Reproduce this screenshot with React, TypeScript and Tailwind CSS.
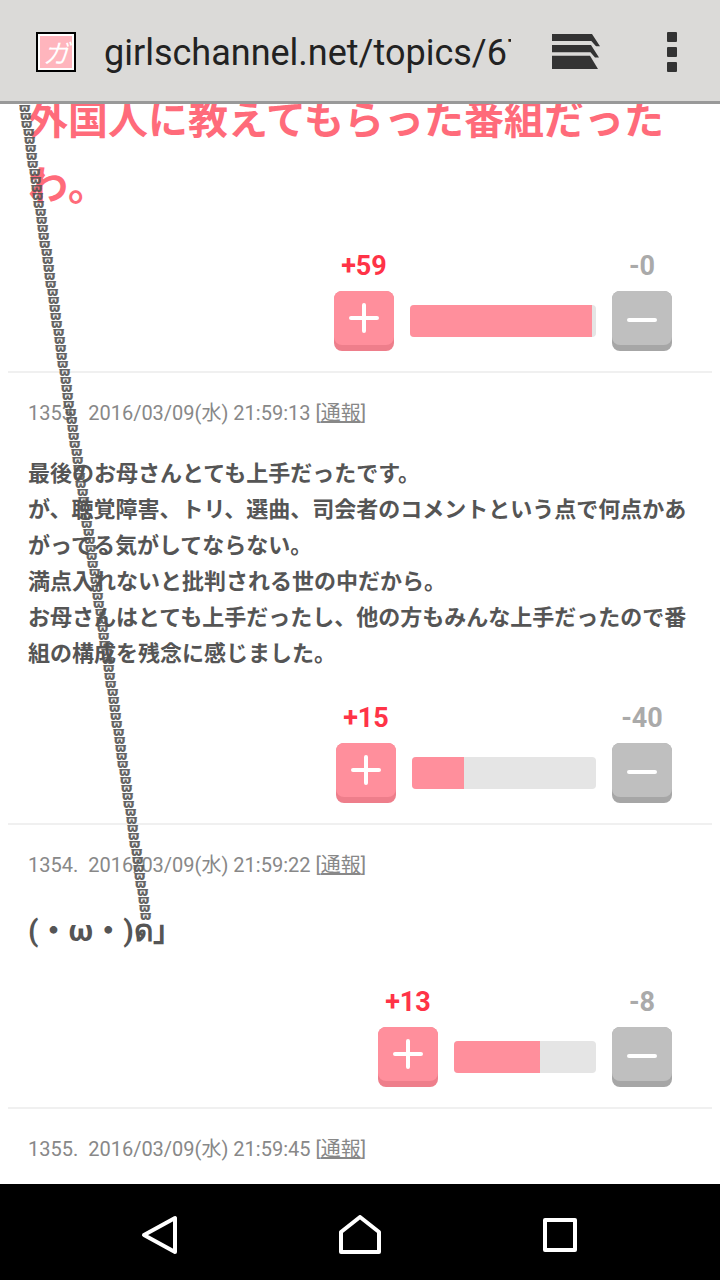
import React from 'react';

const cjk = "font-['Roboto','Noto_Sans_CJK_JP',sans-serif]";

type VoteProps = { plus: string; minus: string; barWidth: string; fill: string };

const Vote: React.FC<VoteProps> = ({ plus, minus, barWidth, fill }) => {
  return (
    <div className="flex justify-end gap-4 pr-10">
      <div className="flex flex-col items-center gap-2">
        <span className="h-9 text-[27px] leading-[38px] font-bold text-[#ff3347]">{plus}</span>
        <button className="flex h-[60px] w-[60px] flex-col rounded-lg bg-[#ee7e8b]">
          <span className="flex h-[54px] w-full items-center justify-center rounded-lg bg-[#ff8f9c]">
            <svg width="30" height="30" viewBox="0 0 30 30" stroke="#fff" strokeWidth="4" strokeLinecap="round">
              <path d="M2 15h26M15 2v26" />
            </svg>
          </span>
        </button>
      </div>
      <div className={`mt-[58px] flex h-8 overflow-hidden rounded bg-[#e5e5e5] ${barWidth}`}>
        <div className={`h-full bg-[#ff8f9c] ${fill}`} />
      </div>
      <div className="flex flex-col items-center gap-2">
        <span className="h-9 text-[27px] leading-[38px] font-bold text-[#aaaaaa]">{minus}</span>
        <button className="flex h-[60px] w-[60px] flex-col rounded-lg bg-[#a6a6a6]">
          <span className="flex h-[54px] w-full items-center justify-center rounded-lg bg-[#bfbfbf]">
            <svg width="30" height="30" viewBox="0 0 30 30" stroke="#fff" strokeWidth="4" strokeLinecap="round">
              <path d="M2 17h26" />
            </svg>
          </span>
        </button>
      </div>
    </div>
  );
};

const Meta: React.FC<{ no: string; time: string }> = ({ no, time }) => {
  return (
    <p className="h-9 whitespace-pre text-[20px] leading-9 text-[#888888]">
      {no}.  2016/03/09(水) {time} [<span className="underline">通報</span>]
    </p>
  );
};

// the mark that sits on the emoticon and climbs up the page
const MarkStack: React.FC = () => {
  const rows = Array.from({ length: 102 });
  return (
    <div className="pointer-events-none absolute top-0 left-[19px] flex flex-col items-start opacity-90">
      {rows.map((_, i) => (
        <span
          key={i}
          className="block h-2 text-[13px] leading-2 font-bold text-[#555555] font-['DejaVu_Sans',sans-serif]"
          style={{ marginLeft: Math.round(i * 1.2) }}
        >
          ϖ
        </span>
      ))}
    </div>
  );
};

export default function App() {
  return (
    <div className={`flex h-[1280px] w-[720px] flex-col overflow-hidden bg-white ${cjk}`}>
      <header className="relative z-10 flex h-[104px] shrink-0 items-center border-b-[3px] border-[#999999] bg-[#dbdad8] pt-[3px]">
        <div className="ml-9 flex h-10 w-10 items-center justify-center border-2 border-black bg-white p-0.5">
          <span className="flex h-full w-full items-center justify-center bg-[#ffb5bd] text-[26px] leading-none text-white italic font-['Noto_Sans_CJK_JP',sans-serif]">
            ガ
          </span>
        </div>
        <div className="ml-7 w-[407px] overflow-hidden whitespace-nowrap pt-0.5 text-[36px] leading-[48px] text-[#222222]">
          girlschannel.net/topics/67
        </div>
        <svg className="ml-[41px]" width="48" height="36" viewBox="0 0 48 36" fill="#333333">
          <path d="M0 0H40L48 12.3H44L39.3 7H0Z" />
          <path d="M0 11H39L47 23.5H43L38.5 18.3H0Z" />
          <path d="M0 21.7H38L46 35H0Z" />
        </svg>
        <div className="ml-[67px] flex flex-col gap-[5px]">
          <div className="h-2.5 w-2.5 rounded-[1px] bg-[#333333]" />
          <div className="h-2.5 w-2.5 rounded-[1px] bg-[#333333]" />
          <div className="h-2.5 w-2.5 rounded-[1px] bg-[#333333]" />
        </div>
      </header>

      <main className="relative min-h-0 flex-1 overflow-hidden">
        <section className="-mt-[20px] mx-2 border-b-2 border-[#f0f0f0] pb-5">
          <h2 className="px-5 pb-[31px] text-[40px] leading-[66px] font-bold text-[#ff6b7a] font-['Noto_Sans_CJK_JP',sans-serif]">
            外国人に教えてもらった番組だったわ。
          </h2>
          <Vote plus="+59" minus="-0" barWidth="w-[186px]" fill="w-[182px]" />
        </section>

        <section className="mx-2 border-b-2 border-[#f0f0f0] pt-[22px] pb-5">
          <div className="px-5">
            <Meta no="1353" time="21:59:13" />
            <p className="mt-[22px] mb-[30px] text-[22px] leading-9 font-bold text-[#555555] font-['Noto_Sans_CJK_JP',sans-serif]">
              最後のお母さんとても上手だったです。
              <br />
              が、聴覚障害、トリ、選曲、司会者のコメントという点で何点かあがってる気がしてならない。
              <br />
              満点入れないと批判される世の中だから。
              <br />
              お母さんはとても上手だったし、他の方もみんな上手だったので番組の構成を残念に感じました。
            </p>
          </div>
          <Vote plus="+15" minus="-40" barWidth="w-[184px]" fill="w-[52px]" />
        </section>

        <section className="mx-2 border-b-2 border-[#f0f0f0] pt-[22px] pb-5">
          <div className="px-5">
            <Meta no="1354" time="21:59:22" />
            <p className="mt-6 mb-7 text-[30px] leading-[48px] font-bold text-[#555555]">(・ω・)ด｣</p>
          </div>
          <Vote plus="+13" minus="-8" barWidth="w-[142px]" fill="w-[86px]" />
        </section>

        <section className="mx-2 pt-[22px]">
          <div className="px-5">
            <Meta no="1355" time="21:59:45" />
          </div>
        </section>

        <MarkStack />
      </main>

      <nav className="flex h-24 shrink-0 items-center justify-center gap-[140px] bg-black pt-[10px]">
        <svg width="60" height="44" viewBox="0 0 60 44" fill="none" stroke="#fff" strokeWidth="4" strokeLinejoin="round">
          <path d="M14 20L45 3V37Z" />
        </svg>
        <svg width="60" height="44" viewBox="0 0 60 44" fill="none" stroke="#fff" strokeWidth="4" strokeLinejoin="round">
          <path d="M30 2L49 17V37H11V17Z" />
        </svg>
        <svg width="60" height="44" viewBox="0 0 60 44" fill="none" stroke="#fff" strokeWidth="4" strokeLinejoin="round">
          <path d="M15 5H45V35H15Z" />
        </svg>
      </nav>
    </div>
  );
}
